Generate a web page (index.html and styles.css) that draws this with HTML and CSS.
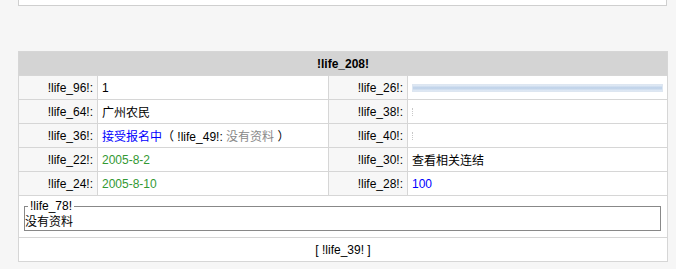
FILE: index.html
```html
<!DOCTYPE html>
<html lang="zh-CN">
<head>
    <meta charset="UTF-8">
    <title>!life_208!</title>
    <link rel="stylesheet" href="styles.css">
</head>
<body>
    <div class="top-box"></div>

    <table class="info-table">
        <colgroup>
            <col class="col-label">
            <col class="col-value">
            <col class="col-label">
            <col class="col-value-wide">
        </colgroup>
        <thead>
            <tr>
                <th colspan="4" class="head">!life_208!</th>
            </tr>
        </thead>
        <tbody>
            <tr>
                <td class="label">!life_96!:</td>
                <td class="value">1</td>
                <td class="label">!life_26!:</td>
                <td class="value"><div class="bar"></div></td>
            </tr>
            <tr>
                <td class="label">!life_64!:</td>
                <td class="value cjk">广州农民</td>
                <td class="label">!life_38!:</td>
                <td class="value"><span class="tick"></span></td>
            </tr>
            <tr>
                <td class="label">!life_36!:</td>
                <td class="value"><span class="link cjk">接受报名中</span><span class="cjk">（</span> !life_49!: <span class="muted cjk">没有资料</span> <span class="cjk">）</span></td>
                <td class="label">!life_40!:</td>
                <td class="value"><span class="tick"></span></td>
            </tr>
            <tr>
                <td class="label">!life_22!:</td>
                <td class="value date">2005-8-2</td>
                <td class="label">!life_30!:</td>
                <td class="value cjk">查看相关连结</td>
            </tr>
            <tr>
                <td class="label">!life_24!:</td>
                <td class="value date">2005-8-10</td>
                <td class="label">!life_28!:</td>
                <td class="value link">100</td>
            </tr>
            <tr>
                <td colspan="4" class="note-cell">
                    <fieldset class="note">
                        <legend>!life_78!</legend>
                        <div class="note-text cjk">没有资料</div>
                    </fieldset>
                </td>
            </tr>
            <tr>
                <td colspan="4" class="foot">[ !life_39! ]</td>
            </tr>
        </tbody>
    </table>
</body>
</html>
```

FILE: styles.css
```css
body {
    margin: 0;
    padding: 0;
    background-color: #f6f6f6;
    font-family: "Liberation Sans", "Noto Sans CJK SC", sans-serif;
    font-size: 12px;
    color: #000;
    overflow: hidden;
}

.top-box {
    height: 5px;
    margin: 0 9px 0 18px;
    background-color: #fff;
    border: 1px solid #cfcfcf;
    border-top: none;
}

.info-table {
    width: 649px;
    margin: 45px 0 0 18px;
    border-collapse: collapse;
    table-layout: fixed;
    background-color: #fff;
    border: 1px solid #d6d6d6;
}

.col-label {
    width: 79px;
}

.col-value {
    width: 231px;
}

.col-value-wide {
    width: 260px;
}

.info-table th,
.info-table td {
    border: 1px solid #d6d6d6;
    padding: 0 4px;
    height: 23px;
    white-space: nowrap;
}

.head {
    background-color: #d4d4d4;
    font-weight: bold;
    text-align: center;
}

.label {
    background-color: #f7f7f7;
    text-align: right;
}

.value {
    text-align: left;
}

.cjk {
    font-family: "Noto Sans CJK SC", sans-serif;
    font-size: 12px;
}

.link {
    color: #0000ff;
}

.muted {
    color: #888;
}

.date {
    color: #339933;
}

.bar {
    height: 6px;
    background: linear-gradient(#e4ecf6, #bcd0e8 50%, #e4ecf6);
    border: 1px solid #dde6f1;
}

.tick {
    display: inline-block;
    width: 1px;
    height: 8px;
    vertical-align: middle;
    border-left: 1px dotted #c8c8c8;
}

.info-table td.note-cell {
    padding: 3px 6px 6px 5px;
    height: auto;
}

.note {
    margin: 0;
    padding: 0 2px 1px 0;
    border: 1px solid #888;
}

.note legend {
    padding: 0 2px;
    margin-left: 3px;
    line-height: 14px;
}

.note-text {
    line-height: 16px;
}

.info-table td.foot {
    text-align: center;
    height: 23px;
}
```
